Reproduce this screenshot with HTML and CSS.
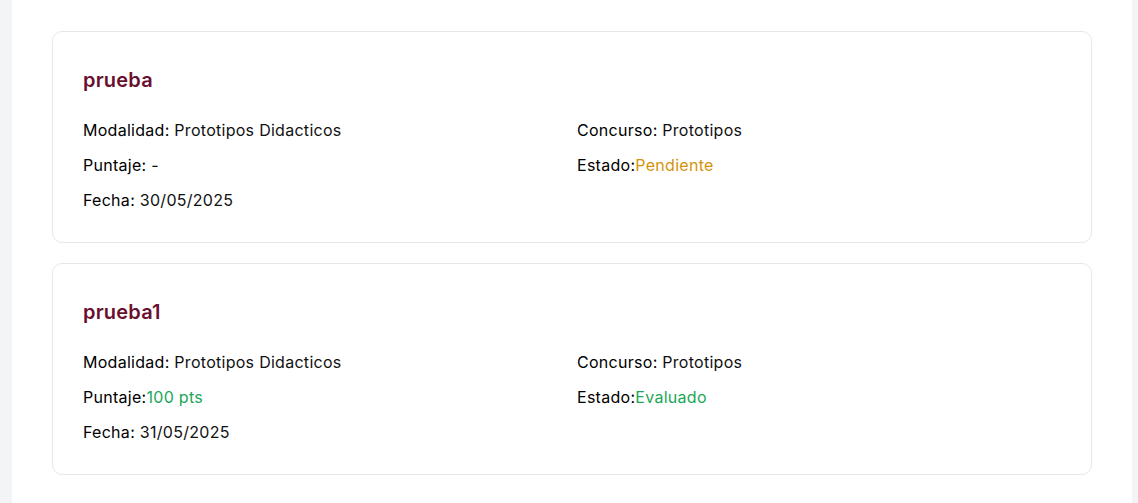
FILE: index.html
```html
<!DOCTYPE html>
<html lang="es">
<head>
<meta charset="utf-8">
<link rel="stylesheet" href="styles.css">
</head>
<body>
<main class="panel">
  <section class="card">
    <h2 class="title">prueba</h2>
    <div class="grid">
      <div class="row"><span class="label">Modalidad:</span> Prototipos Didacticos</div>
      <div class="row"><span class="label">Concurso:</span> Prototipos</div>
      <div class="row"><span class="label">Puntaje:</span> -</div>
      <div class="row"><span class="label">Estado:</span><span class="pending">Pendiente</span></div>
      <div class="row"><span class="label">Fecha:</span> 30/05/2025</div>
    </div>
  </section>
  <section class="card">
    <h2 class="title">prueba1</h2>
    <div class="grid">
      <div class="row"><span class="label">Modalidad:</span> Prototipos Didacticos</div>
      <div class="row"><span class="label">Concurso:</span> Prototipos</div>
      <div class="row"><span class="label">Puntaje:</span><span class="ok">100 pts</span></div>
      <div class="row"><span class="label">Estado:</span><span class="ok">Evaluado</span></div>
      <div class="row"><span class="label">Fecha:</span> 31/05/2025</div>
    </div>
  </section>
</main>
</body>
</html>
```
FILE: styles.css
```css
html, body { margin: 0; padding: 0; }
body {
  background: #f3f4f6;
  font-family: Inter, "Noto Sans", sans-serif;
  color: #111111;
}
.panel {
  background: #ffffff;
  margin: 0 6px 0 12px;
  padding: 31px 40px 40px;
  display: flex;
  flex-direction: column;
  gap: 20px;
  min-height: 503px;
  box-sizing: border-box;
}
.card {
  border: 1px solid #e5e7eb;
  border-radius: 10px;
  padding: 34px 30px 30px;
}
.title {
  margin: 0 0 24px;
  font-size: 20px;
  line-height: 28px;
  font-weight: 600;
  letter-spacing: 0.2px;
  color: #6a0f2f;
}
.grid {
  display: grid;
  grid-template-columns: 1fr 1fr;
  column-gap: 10px;
  row-gap: 11px;
}
.row {
  font-size: 16px;
  line-height: 24px;
  letter-spacing: 0.28px;
  color: #111111;
}
.label { font-weight: 400; color: #000000; }
.pending { color: #d4930c; }
.ok { color: #20a65a; }
```
